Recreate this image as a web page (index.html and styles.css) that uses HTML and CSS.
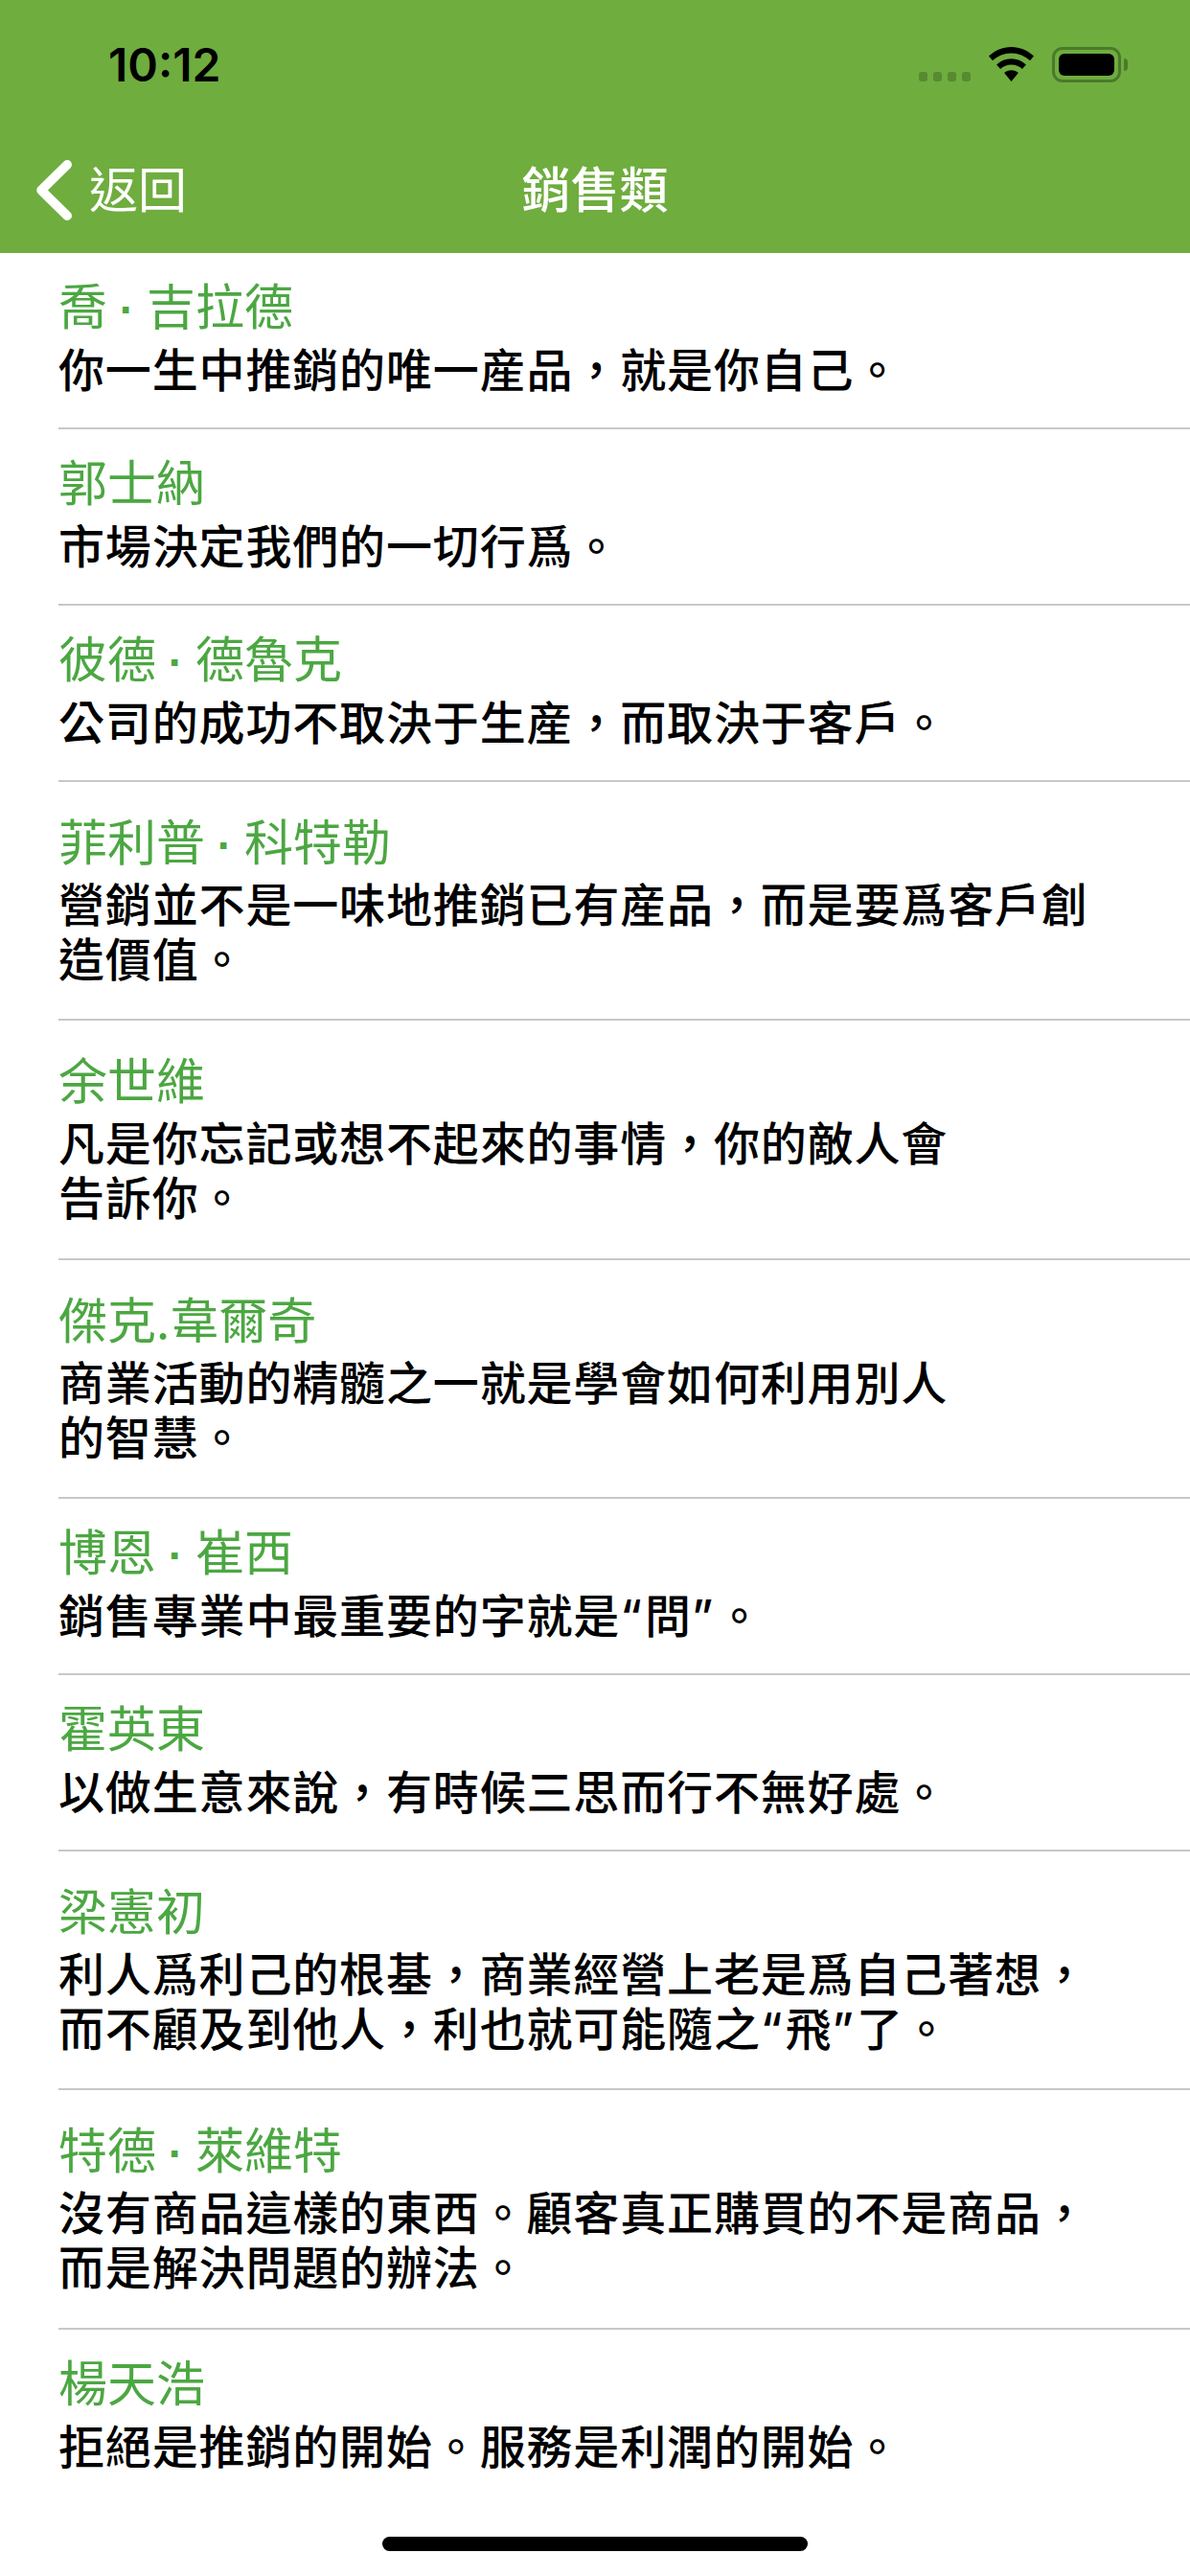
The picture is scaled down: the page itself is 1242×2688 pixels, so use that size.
FILE: index.html
```html
<!DOCTYPE html>
<html lang="zh-TW">
<head>
<meta charset="utf-8">
<title>銷售類</title>
<link rel="stylesheet" href="styles.css">
</head>
<body>
<div class="screen">
  <header class="header">
    <div class="status">
      <span class="time">10:12</span>
      <div class="status-icons">
        <div class="signal"><i></i><i></i><i></i><i></i></div>
        <svg class="wifi" width="47" height="36" viewBox="0 0 47 36"><path d="M23.5 0C14.6 0 6.6 3.4 0 9.6l4 4.6C9.4 9.2 16 6.4 23.5 6.4S37.6 9.2 43 14.2l4-4.6C40.400 3.400 32.400 0 23.500 0z"/><path d="M23.500 12.200c-5.800 0-11 2.200-15.400 6.200l4 4.600c3-2.800 7-4.400 11.400-4.400s8.400 1.600 11.400 4.400l4-4.600c-4.400-4-9.600-6.200-15.400-6.200z"/><path d="M23.500 24.200c-2.800 0-5.200 1-7.400 2.800l7.400 9 7.400-9c-2.200-1.800-4.600-2.800-7.400-2.800z"/></svg>
        <div class="battery"><div class="battery-body"><div class="battery-fill"></div></div><div class="battery-cap"></div></div>
      </div>
    </div>
    <nav class="nav">
      <div class="back">
        <svg class="chevron" width="40" height="72" viewBox="0 0 40 72"><path d="M33.250 9.750 6 36.500l27.250 26.750" fill="none" stroke="#fff" stroke-width="9.500" stroke-linecap="round" stroke-linejoin="round"/></svg>
        <span class="back-label">返回</span>
      </div>
      <h1 class="title">銷售類</h1>
    </nav>
  </header>
  <main class="list">
    <div class="row"><div class="name">喬<span class="dot"> · </span>吉拉德</div><div class="quote">你一生中推銷的唯一産品&#xFF0C;就是你自己。</div></div>
    <div class="row"><div class="name">郭士納</div><div class="quote">市場決定我們的一切行爲。</div></div>
    <div class="row"><div class="name">彼德<span class="dot"> · </span>德魯克</div><div class="quote">公司的成功不取決于生産&#xFF0C;而取決于客戶。</div></div>
    <div class="row two"><div class="name">菲利普<span class="dot"> · </span>科特勒</div><div class="quote">營銷並不是一味地推銷已有産品&#xFF0C;而是要爲客戶創<br>造價值。</div></div>
    <div class="row two"><div class="name">余世維</div><div class="quote">凡是你忘記或想不起來的事情&#xFF0C;你的敵人會<br>告訴你。</div></div>
    <div class="row two"><div class="name">傑克.韋爾奇</div><div class="quote">商業活動的精髓之一就是學會如何利用別人<br>的智慧。</div></div>
    <div class="row"><div class="name">博恩<span class="dot"> · </span>崔西</div><div class="quote">銷售專業中最重要的字就是<span class="mark">“</span>問<span class="mark">”</span>。</div></div>
    <div class="row"><div class="name">霍英東</div><div class="quote">以做生意來說&#xFF0C;有時候三思而行不無好處。</div></div>
    <div class="row two"><div class="name">梁憲初</div><div class="quote">利人爲利己的根基&#xFF0C;商業經營上老是爲自己著想&#xFF0C;<br>而不顧及到他人&#xFF0C;利也就可能隨之<span class="mark">“</span>飛<span class="mark">”</span>了。</div></div>
    <div class="row two"><div class="name">特德<span class="dot"> · </span>萊維特</div><div class="quote">沒有商品這樣的東西。顧客真正購買的不是商品&#xFF0C;<br>而是解決問題的辦法。</div></div>
    <div class="row last"><div class="name">楊天浩</div><div class="quote">拒絕是推銷的開始。服務是利潤的開始。</div></div>
  </main>
  <div class="home-indicator"></div>
</div>
</body>
</html>
```
FILE: styles.css
```css
* { box-sizing: border-box; margin: 0; padding: 0; }
html, body { width: 1242px; height: 2688px; overflow: hidden; background: #fff; }
body { font-family: "Noto Sans CJK TC", "Noto Sans", sans-serif; color: #000; }
.screen { position: relative; width: 1242px; height: 2688px; display: flex; flex-direction: column; }

.header { height: 264px; background: #6fad3f; display: flex; flex-direction: column; flex: none; }
.status { height: 132px; display: flex; align-items: flex-start; justify-content: space-between; padding: 40px 65px 0 113px; }
.time { font-family: Inter, "Liberation Sans", sans-serif; font-weight: 600; font-size: 48px; line-height: 56px; letter-spacing: 0; }
.status-icons { display: flex; align-items: flex-start; padding-top: 9px; }
.signal { display: flex; gap: 6px; margin-top: 26px; margin-right: 19px; }
.signal i { width: 9px; height: 10px; border-radius: 3px; background: #578a32; }
.wifi { margin-right: 19px; }
.battery { display: flex; align-items: center; height: 37px; }
.battery-body { width: 72px; height: 37px; padding: 4px; border: 3px solid #4a7a2a; border-radius: 11px; }
.battery-fill { width: 100%; height: 100%; background: #000; border-radius: 6px; }
.battery-cap { width: 4px; height: 13px; margin-left: 3px; background: #4a7a2a; border-radius: 0 6px 6px 0; }

.nav { flex: 1; display: grid; grid-template-columns: 1fr auto 1fr; align-items: start; padding-top: 30px; }
.back { grid-column: 1; grid-row: 1; display: flex; align-items: flex-start; padding-left: 37px; color: #fff; }
.chevron { flex: none; }
.back-label { font-size: 51px; line-height: 66px; margin-left: 16px; font-weight: 400; }
.title { grid-column: 2; grid-row: 1; font-size: 51px; line-height: 66px; font-weight: 500; color: #fff; }

.list { flex: 1; display: flex; flex-direction: column; }
.row { height: 184px; margin-left: 61px; padding-top: 23px; border-bottom: 2px solid #c8c7cc; }
.row.two { height: 249.33px; padding-top: 30px; }
.row.last { border-bottom: 0; }
.name { font-size: 51px; line-height: 60px; color: #4ca742; white-space: nowrap; }
.dot { font-family: "Liberation Sans", sans-serif; font-size: 46px; font-weight: 700; line-height: 0; white-space: pre; }
.quote { font-size: 48px; font-weight: 500; line-height: 57px; letter-spacing: 0.85px; margin-top: 8px; white-space: nowrap; }
.two .quote { margin-top: 7px; }
.mark { font-family: Inter, "Liberation Sans", sans-serif; font-weight: 500; line-height: 0; letter-spacing: 3px; }

.home-indicator { position: absolute; left: 399px; bottom: 26px; width: 444px; height: 15px; border-radius: 8px; background: #000; }
```
